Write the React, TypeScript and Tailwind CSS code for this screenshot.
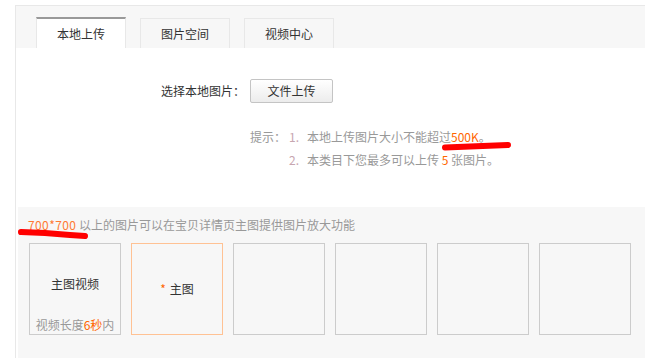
import React from "react";

const font = { fontFamily: '"Noto Sans CJK SC", "Noto Sans", sans-serif' };

export default function App() {
  const empties = [0, 1, 2, 3];
  return (
    <div className="relative w-[645px] h-[358px] bg-white pt-[5px] pl-[15px] overflow-hidden" style={font}>
      <div className="h-full border-l border-t border-[#e8e8e8] flex flex-col">
        {/* header tabs */}
        <div className="h-[42px] bg-[#f7f7f7] flex items-end gap-[14px] pl-[20px]">
          <div className="w-[90px] h-[31px] bg-white border-t-2 border-t-[#999] border-x border-x-[#e8e8e8] flex items-center justify-center text-[12px] text-[#333]">
            本地上传
          </div>
          <div className="w-[90px] h-[30px] bg-[#f7f7f7] border border-b-0 border-[#e8e8e8] flex items-center justify-center text-[12px] text-[#333]">
            图片空间
          </div>
          <div className="w-[90px] h-[30px] bg-[#f7f7f7] border border-b-0 border-[#e8e8e8] flex items-center justify-center text-[12px] text-[#333]">
            视频中心
          </div>
        </div>
        {/* content */}
        <div className="h-[159px] bg-white pt-[31px] pl-[145px]">
          <div className="flex items-center gap-[5px] text-[12px] text-[#333]">
            <span className="w-[84px] leading-[24px]">选择本地图片：</span>
            <button className="w-[83px] h-[24px] border border-[#c4c4c4] rounded-[2px] bg-gradient-to-b from-white to-[#ececec] text-[12px] text-[#333] leading-[22px]">
              文件上传
            </button>
          </div>
          <div className="mt-[22px] pl-[89px] text-[12px] text-[#999] leading-[23px]">
            <div className="flex">
              <span className="w-[39px]">提示：</span>
              <span className="w-[18px] text-[#c7a6b0]">1.</span>
              <span>本地上传图片大小不能超过<span className="text-[#ff6600]">500K</span>。</span>
            </div>
            <div className="flex">
              <span className="w-[39px]"></span>
              <span className="w-[18px] text-[#c7a6b0]">2.</span>
              <span>本类目下您最多可以上传 <span className="text-[#ff6600]">5</span> 张图片。</span>
            </div>
          </div>
        </div>
        {/* gray section */}
        <div className="flex-1 ml-[2px] bg-[#f7f7f7] pl-[10px] pt-[10px]">
          <div className="text-[12px] leading-[16px] text-[#999]">
            <span className="text-[#ff7a33] tracking-[0.4px]">700*700</span> 以上的图片可以在宝贝详情页主图提供图片放大功能
          </div>
          <div className="mt-[10px] ml-[1px] flex gap-[10px]">
            <div className="w-[92px] h-[92px] border border-[#cccccc] flex flex-col items-center text-[12px]">
              <div className="flex-1 flex items-center text-[#333] pt-[6px]">主图视频</div>
              <div className="text-[#999] leading-[16px] pb-[1px]">
                视频长度<span className="text-[#ff6600]">6秒</span>内
              </div>
            </div>
            <div className="w-[92px] h-[92px] border border-[#ffc294] flex items-center justify-center text-[12px] text-[#333]">
              <span className="text-[#ff6600] mr-[4px]">*</span>主图
            </div>
            {empties.map((i) => (
              <div key={i} className="w-[92px] h-[92px] border border-[#cccccc]" />
            ))}
          </div>
        </div>
      </div>
      {/* red annotation scribbles */}
      <svg className="absolute left-0 top-0 pointer-events-none" width="645" height="358">
        <path d="M445 147.5 L470 146.5 L508 145" stroke="#ff0000" strokeWidth="6" strokeLinecap="round" fill="none" />
        <path d="M21 232 L45 233 L70 235 L85 236" stroke="#ff0000" strokeWidth="6" strokeLinecap="round" fill="none" />
      </svg>
    </div>
  );
}
